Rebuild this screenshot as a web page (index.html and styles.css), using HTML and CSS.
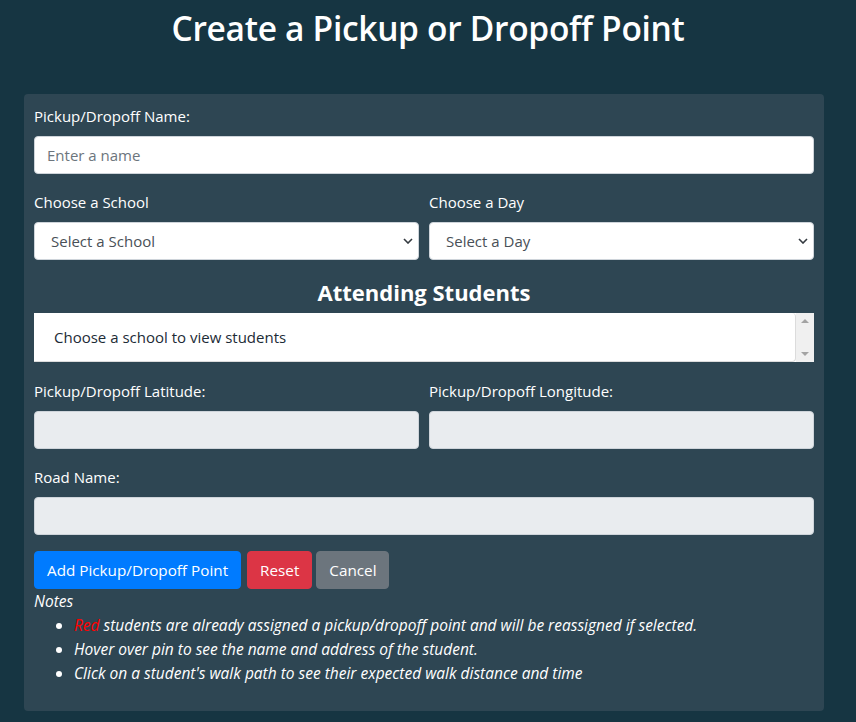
FILE: index.html
```html
<!DOCTYPE html>
<html lang="en">
<head>
<meta charset="utf-8">
<title>Create a Pickup or Dropoff Point</title>
<link rel="stylesheet" href="styles.css">
</head>
<body>
<h1 class="page-title">Create a Pickup or Dropoff Point</h1>
<form class="card">
  <div class="form-group">
    <label class="label" for="name">Pickup/Dropoff Name:</label>
    <input class="control" id="name" type="text" placeholder="Enter a name">
  </div>
  <div class="row">
    <div class="form-group col">
      <label class="label" for="school">Choose a School</label>
      <select class="control select" id="school"><option>Select a School</option></select>
    </div>
    <div class="form-group col">
      <label class="label" for="day">Choose a Day</label>
      <select class="control select" id="day"><option>Select a Day</option></select>
    </div>
  </div>
  <h4 class="section-title">Attending Students</h4>
  <div class="students-box">
    <div class="students-list">
      <div class="students-item">Choose a school to view students</div>
    </div>
    <div class="scrollbar">
      <span class="arrow arrow-up"></span>
      <span class="arrow arrow-down"></span>
    </div>
  </div>
  <div class="row">
    <div class="form-group col">
      <label class="label" for="lat">Pickup/Dropoff Latitude:</label>
      <input class="control" id="lat" type="text" readonly>
    </div>
    <div class="form-group col">
      <label class="label" for="lng">Pickup/Dropoff Longitude:</label>
      <input class="control" id="lng" type="text" readonly>
    </div>
  </div>
  <div class="form-group">
    <label class="label" for="road">Road Name:</label>
    <input class="control" id="road" type="text" readonly>
  </div>
  <div class="buttons">
    <button type="button" class="btn btn-primary">Add Pickup/Dropoff Point</button>
    <button type="button" class="btn btn-danger">Reset</button>
    <button type="button" class="btn btn-secondary">Cancel</button>
  </div>
  <div class="notes">
    <div>Notes</div>
    <ul class="notes-list">
      <li><span class="red">Red</span> students are already assigned a pickup/dropoff point and will be reassigned if selected.</li>
      <li>Hover over pin to see the name and address of the student.</li>
      <li>Click on a student's walk path to see their expected walk distance and time</li>
    </ul>
  </div>
</form>
</body>
</html>
```
FILE: styles.css
```css
* { box-sizing: border-box; }
html, body { margin: 0; padding: 0; }
body {
  background: #163542;
  color: #ffffff;
  font-family: "Open Sans", "Noto Sans", sans-serif;
  font-size: 15px;
  line-height: 24px;
  min-height: 722px;
}
.page-title {
  margin: 0;
  padding-top: 6px;
  height: 94px;
  text-align: center;
  font-size: 33.5px;
  font-weight: 600;
  line-height: 44px;
  letter-spacing: -0.3px;
}
.card {
  width: 800px;
  margin-left: 24px;
  background: #2e4653;
  border-radius: 4px;
  padding: 10px;
}
.form-group { margin-bottom: 16px; }
.label { display: block; margin-bottom: 8px; height: 24px; }
.row { display: flex; gap: 10px; }
.col { flex: 1 1 0; min-width: 0; }
.control {
  display: block;
  width: 100%;
  height: 38px;
  padding: 6px 12px;
  font-family: inherit;
  font-size: 15px;
  line-height: 24px;
  color: #495057;
  background: #ffffff;
  border: 1px solid #ced4da;
  border-radius: 4px;
  outline: none;
}
.control::placeholder { color: #6c757d; }
.control[readonly] { background: #e9ecef; }
.select {
  appearance: none;
  -webkit-appearance: none;
  padding-left: 16px;
  background-image: url("data:image/svg+xml,%3Csvg xmlns='http://www.w3.org/2000/svg' width='10' height='6' viewBox='0 0 10 6'%3E%3Cpath d='M1 1l4 4 4-4' fill='none' stroke='%23343a40' stroke-width='1.6'/%3E%3C/svg%3E");
  background-repeat: no-repeat;
  background-position: right 5px center;
  background-size: 10px 6px;
}
.section-title {
  margin: 0 0 10px;
  padding-top: 6px;
  text-align: center;
  font-size: 22px;
  font-weight: 700;
  line-height: 21px;
}
.students-box {
  display: flex;
  height: 49px;
  margin-bottom: 17px;
  background: #ffffff;
}
.students-list { flex: 1; display: flex; }
.students-item {
  flex: 1;
  padding: 12px 20px;
  color: #1c2b36;
  border: 1px solid #dcdcdc;
  border-left: none;
  border-top: none;
  border-radius: 0 4px 4px 0;
}
.scrollbar {
  width: 18px;
  background: #f0f0f0;
  display: flex;
  flex-direction: column;
  justify-content: space-between;
  align-items: center;
  padding: 6px 0 6px;
}
.arrow { width: 0; height: 0; border-left: 4px solid transparent; border-right: 4px solid transparent; }
.arrow-up { border-bottom: 4px solid #a3a3a3; }
.arrow-down { border-top: 4px solid #a3a3a3; }
.buttons { display: flex; gap: 4px; }
.btn {
  height: 38px;
  padding: 6px 12px;
  font-family: inherit;
  font-size: 15.25px;
  line-height: 24px;
  color: #ffffff;
  border: 1px solid transparent;
  border-radius: 4px;
}
.btn-primary { background: #007bff; border-color: #007bff; margin-right: 2px; }
.btn-danger { background: #dc3545; border-color: #dc3545; }
.btn-secondary { background: #6c757d; border-color: #6c757d; }
.notes { font-style: italic; font-size: 15.5px; }
.notes-list { margin: 0 0 16px; padding-left: 40px; }
.red { color: #ff0000; }
```
